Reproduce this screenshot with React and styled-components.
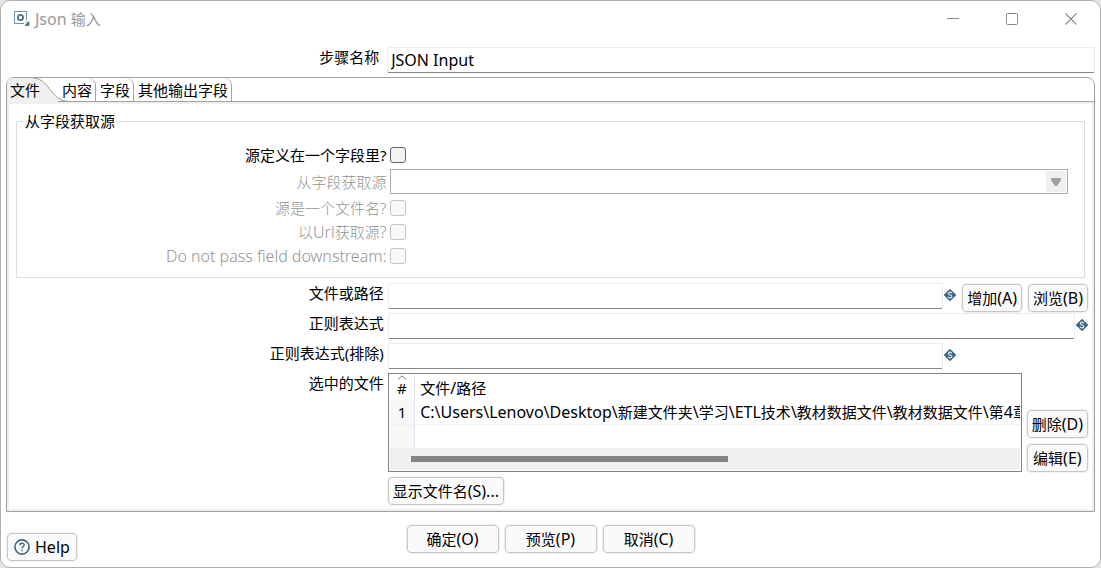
import React, { useState } from "react"
import styled, { createGlobalStyle } from "styled-components"

const files = [
    { id: 1, path: "C:\\Users\\Lenovo\\Desktop\\新建文件夹\\学习\\ETL技术\\教材数据文件\\教材数据文件\\第4章" },
]

const tabs = ["文件", "内容", "字段", "其他输出字段"]

// latin runs are set one size larger than the chinese around them
const Mixed = ({ text }) =>
    text.split(/([\x20-\x7e]+)/).map((part, i) => i % 2 ? <Latin key={i}>{part}</Latin> : part)

const VariableIcon = () => (
    <Diamond viewBox="0 0 12 12" aria-hidden="true">
        <path d="M6 0.6L11.4 6L6 11.4L0.6 6Z" fill="#3d6480" stroke="#3d6480" strokeWidth="1.2" strokeLinejoin="round" />
        <path d="M8 4.3C7.5 3.6 6.8 3.4 6 3.4C4.9 3.4 4.2 3.9 4.2 4.6C4.2 6.4 7.9 5.6 7.9 7.4C7.9 8.2 7.1 8.7 6 8.7C5.1 8.7 4.4 8.4 3.9 7.7M6 2.2V3.4M6 8.7V9.8" fill="none" stroke="#dfe8ee" strokeWidth="1.1" />
    </Diamond>
)

const App = () => {
    const [name, setName] = useState("JSON Input")
    const [active, setActive] = useState("文件")

    return (
        <>
            <GlobalStyle />
            <Window>
                <TitleBar>
                    <AppIcon viewBox="0 0 16 16" aria-hidden="true">
                        <path d="M10 12.5H0.5V0.5H12.5V9" fill="none" stroke="#7593a8" />
                        <circle cx="6.5" cy="6.5" r="2.6" fill="none" stroke="#4d738f" strokeWidth="1.8" />
                        <path d="M11 10L14 13M15 10.5V14.5H11Z" fill="#3d6480" stroke="#3d6480" strokeWidth="0.6" />
                    </AppIcon>
                    <Title><Mixed text="Json 输入" /></Title>
                    <WindowButton aria-label="最小化">
                        <svg width="12" height="12"><path d="M0 5.5H12" stroke="#8a8a8a" /></svg>
                    </WindowButton>
                    <WindowButton aria-label="最大化">
                        <svg width="12" height="12"><rect x="0.5" y="0.5" width="11" height="11" rx="1" fill="none" stroke="#8a8a8a" /></svg>
                    </WindowButton>
                    <WindowButton aria-label="关闭">
                        <svg width="12" height="12"><path d="M0.5 0.5L11.5 11.5M11.5 0.5L0.5 11.5" stroke="#8a8a8a" strokeWidth="1.1" /></svg>
                    </WindowButton>
                </TitleBar>

                <Body>
                    <NameRow>
                        <NameLabel htmlFor="step">步骤名称</NameLabel>
                        <Input id="step" value={name} onChange={(e) => setName(e.target.value)} />
                    </NameRow>

                    <Folder>
                        <TabList role="tablist">
                            {tabs.map((tab, i) => (
                                <Tab key={tab} role="tab" $first={i === 0} aria-selected={tab === active} onClick={() => setActive(tab)}>
                                    {i === 0 && (
                                        <TabShape viewBox="0 0 62 25" aria-hidden="true">
                                            <path d="M0 25V6Q0 0 7 0H26C43 0 43 23.5 62 23.5V25Z" fill="#f0f0f0" />
                                            <path d="M26 0C43 0 43 23.5 62 23.5" fill="none" stroke="#a0a0a0" />
                                        </TabShape>
                                    )}
                                    <span>{tab}</span>
                                </Tab>
                            ))}
                            <TabRest />
                        </TabList>
                        <Pane role="tabpanel">
                            <Group>
                                <Legend>从字段获取源</Legend>
                                <CheckRow>
                                    <Label htmlFor="in-field">源定义在一个字段里?</Label>
                                    <Checkbox id="in-field" />
                                </CheckRow>
                                <SelectRow>
                                    <Label htmlFor="source" $disabled>从字段获取源</Label>
                                    <SelectBox>
                                        <Select id="source" disabled><option></option></Select>
                                        <Arrow><svg width="10" height="8"><path d="M0 0H10V2L6 8H4L0 2Z" fill="#a0a0a0" /></svg></Arrow>
                                    </SelectBox>
                                </SelectRow>
                                <CheckRow>
                                    <Label htmlFor="is-file" $disabled>源是一个文件名?</Label>
                                    <Checkbox id="is-file" disabled />
                                </CheckRow>
                                <CheckRow>
                                    <Label htmlFor="is-url" $disabled><Mixed text="以Url获取源?" /></Label>
                                    <Checkbox id="is-url" disabled />
                                </CheckRow>
                                <CheckRow>
                                    <Label htmlFor="no-pass" $disabled><Mixed text="Do not pass field downstream:" /></Label>
                                    <Checkbox id="no-pass" disabled />
                                </CheckRow>
                            </Group>

                            <Row>
                                <Label htmlFor="path">文件或路径</Label>
                                <Field>
                                    <Input id="path" />
                                    <VariableIcon />
                                    <FieldButtons>
                                        <Button><Mixed text="增加(A)" /></Button>
                                        <Button><Mixed text="浏览(B)" /></Button>
                                    </FieldButtons>
                                </Field>
                            </Row>
                            <Row>
                                <Label htmlFor="regex">正则表达式</Label>
                                <Field>
                                    <Input id="regex" />
                                    <VariableIcon />
                                </Field>
                            </Row>
                            <Row>
                                <Label htmlFor="exclude">正则表达式(排除)</Label>
                                <Field $short>
                                    <Input id="exclude" />
                                    <VariableIcon />
                                </Field>
                            </Row>
                            <TableRow>
                                <Label as="span" id="selected">选中的文件</Label>
                                <TableField>
                                    <TableBox>
                                        <Table aria-labelledby="selected">
                                            <thead>
                                                <tr>
                                                    <Th>
                                                        <SortMark width="10" height="5"><path d="M1 4.5L5 0.8L9 4.5" fill="none" stroke="#777" /></SortMark>
                                                        #
                                                    </Th>
                                                    <Th><Mixed text="文件/路径" /></Th>
                                                </tr>
                                            </thead>
                                            <tbody>
                                                {files.map(file => (
                                                    <tr key={file.id}>
                                                        <Td>{file.id}</Td>
                                                        <Td><Mixed text={file.path} /></Td>
                                                    </tr>
                                                ))}
                                                <tr>
                                                    <Td></Td>
                                                    <Td></Td>
                                                </tr>
                                            </tbody>
                                        </Table>
                                        <Scrollbar><Thumb /></Scrollbar>
                                    </TableBox>
                                    <SideButtons>
                                        <Button><Mixed text="删除(D)" /></Button>
                                        <Button><Mixed text="编辑(E)" /></Button>
                                    </SideButtons>
                                </TableField>
                            </TableRow>
                            <ShowRow>
                                <Button><Mixed text="显示文件名(S)..." /></Button>
                            </ShowRow>
                        </Pane>
                    </Folder>
                </Body>

                <Footer>
                    <HelpButton>
                        <svg width="16" height="16" viewBox="0 0 16 16" aria-hidden="true">
                            <circle cx="8" cy="8" r="7.1" fill="none" stroke="#3d6480" strokeWidth="1.6" />
                            <path d="M5.9 6.3C5.9 3.6 10.2 3.7 10.2 6.1C10.2 7.6 8.1 7.6 8.1 9.5M8.1 10.7V12.2" fill="none" stroke="#3d6480" strokeWidth="1.4" />
                        </svg>
                        <Latin>Help</Latin>
                    </HelpButton>
                    <Actions>
                        <ActionButton><Mixed text="确定(O)" /></ActionButton>
                        <ActionButton><Mixed text="预览(P)" /></ActionButton>
                        <ActionButton><Mixed text="取消(C)" /></ActionButton>
                    </Actions>
                </Footer>
            </Window>
        </>
    )
}

const GlobalStyle = createGlobalStyle`
* {
    box-sizing: border-box;
}
body {
    margin: 0;
    background: #e4e4e4;
    color: #000;
}
body, button, input, select {
    font-family: "Noto Sans", "Noto Sans CJK SC", sans-serif;
    font-size: 15px;
    line-height: 20px;
}
`

const Window = styled.div`
    display: flex;
    flex-direction: column;
    min-height: 100vh;
    background: #fff;
    border: 1px solid #b0b0b0;
    border-radius: 10px;
`

const Latin = styled.span`
    font-size: 16px;
`

const TitleBar = styled.header`
    display: flex;
    align-items: center;
    height: 36px;
    padding-left: 13px;
`

const AppIcon = styled.svg`
    width: 16px;
    height: 16px;
    margin-right: 5px;
`

const Title = styled.h1`
    flex: 1;
    margin: 0;
    font-size: 15px;
    font-weight: 400;
    color: #999;
`

const WindowButton = styled.button`
    display: flex;
    align-items: center;
    justify-content: center;
    width: 59px;
    height: 36px;
    padding: 0;
    border: 0;
    background: none;
`

const Body = styled.main`
    display: flex;
    flex-direction: column;
    padding: 10px 5px 0;
`

const NameRow = styled.div`
    display: grid;
    grid-template-columns: 35% 1fr;
`

const Label = styled.label`
    padding-right: 4px;
    text-align: right;
    white-space: nowrap;
    color: ${props => props.$disabled ? "#949494" : "#000"};
    font-weight: ${props => props.$disabled ? 300 : 400};
`

const NameLabel = styled(Label)`
    padding-right: 8px;
`

const Input = styled.input`
    flex: 1;
    min-width: 0;
    height: 26px;
    padding: 0 3px;
    border: 1px solid #ececec;
    border-bottom-color: #868686;
    border-radius: 2px;
    outline: none;
    background: #fff;
    font-size: 16px;
`

const Folder = styled.section`
    margin-top: 4px;
    border: 1px solid #a0a0a0;
    border-radius: 8px 8px 0 0;
`

const TabList = styled.div`
    display: flex;
    height: 24px;
`

const Tab = styled.button`
    position: relative;
    padding: 0 3px 0 4px;
    border: 0;
    border-right: ${props => props.$first ? "0" : "1px solid #a0a0a0"};
    border-bottom: ${props => props.$first ? "0" : "1px solid #a0a0a0"};
    border-radius: 0 8px 0 0;
    background: none;
    color: #000;
    white-space: nowrap;

    span {
        position: relative;
    }
    &:first-child {
        width: 51px;
        padding-left: 3px;
        text-align: left;
    }
`

const TabShape = styled.svg`
    position: absolute;
    left: 0;
    top: 0;
    width: 62px;
    height: 25px;
`

const TabRest = styled.div`
    flex: 1;
    border-bottom: 1px solid #a0a0a0;
`

const Pane = styled.div`
    padding: 7px 1px 4px 0;
    border: 2px solid #f0f0f0;
`

const Group = styled.fieldset`
    margin: 0 6px 5px 7px;
    padding: 12px 0 9px;
    border: 1px solid #dcdcdc;
`

const Legend = styled.legend`
    margin-left: 6px;
    padding: 0 2px;
`

const CheckRow = styled.div`
    display: grid;
    grid-template-columns: 35% 1fr;
    align-items: center;
    height: 24px;
`

const SelectRow = styled(CheckRow)`
    height: 29px;
`

const Checkbox = styled.input.attrs({ type: "checkbox" })`
    appearance: none;
    width: 16px;
    height: 16px;
    margin: 0;
    border: 1px solid #626262;
    border-radius: 3px;
    background: #f3f3f3;

    &:disabled {
        border-color: #c3c3c3;
        background: #f9f9f9;
    }
`

const SelectBox = styled.div`
    display: grid;
    margin-right: 16px;
`

const Select = styled.select`
    grid-area: 1 / 1;
    appearance: none;
    height: 25px;
    border: 1px solid #adadad;
    border-radius: 0;
    background: #fff;
    opacity: 1;
`

const Arrow = styled.span`
    grid-area: 1 / 1;
    justify-self: end;
    align-self: center;
    display: flex;
    align-items: center;
    justify-content: center;
    width: 20px;
    height: 21px;
    margin-right: 2px;
    background: #f0f0f0;
    pointer-events: none;
`

const Row = styled.div`
    display: grid;
    grid-template-columns: 35% 1fr;
    height: 30px;
`

const Field = styled.div`
    display: flex;
    align-items: flex-start;
    padding-right: ${props => props.$short ? "135px" : "3px"};
`

const Diamond = styled.svg`
    flex: none;
    width: 12px;
    height: 12px;
    margin: 6px 0 0 1px;
`

const FieldButtons = styled.div`
    display: flex;
    gap: 6px;
    padding: 1px 0 0 6px;
`

const Button = styled.button`
    height: 28px;
    padding: 0 4px;
    border: 1px solid #c6c6c6;
    border-radius: 4px;
    outline: 1px solid #f0f0f0;
    background: #fafafa;
    color: #000;
    white-space: nowrap;
`

const TableRow = styled.div`
    display: grid;
    grid-template-columns: 35% minmax(0, 1fr);
`

const TableField = styled.div`
    display: flex;
    gap: 5px;
    padding-right: 3px;
`

const TableBox = styled.div`
    flex: 1;
    min-width: 0;
    overflow: hidden;
    padding: 1px;
    border: 1px solid #82828c;
`

const Table = styled.table`
    width: 100%;
    border-collapse: collapse;
    table-layout: fixed;
`

const Th = styled.th`
    height: 25px;
    padding: 0 5px;
    font-weight: 400;
    text-align: left;

    &:first-child {
        position: relative;
        width: 25px;
        padding: 0;
        border-right: 1px solid #e5e5e5;
        text-align: center;
    }
`

const SortMark = styled.svg`
    position: absolute;
    left: 7px;
    top: 0;
`

const Td = styled.td`
    height: 24px;
    padding: 0 0 0 5px;
    overflow: hidden;
    border-bottom: 1px solid #f0f0f0;
    white-space: nowrap;

    &:first-child {
        padding: 0;
        border-right: 1px solid #dce6f4;
        background: #f7f7f7;
        text-align: center;
    }
`

const Scrollbar = styled.div`
    height: 21px;
    padding: 7px 21px;
    background: #f0f0f0;
`

const Thumb = styled.div`
    width: 54%;
    height: 6px;
    background: #858585;
`

const SideButtons = styled.div`
    display: flex;
    flex-direction: column;
    justify-content: flex-end;
    gap: 6px;
`

const ShowRow = styled.div`
    margin: 5px 0 0 35%;
`

const Footer = styled.footer`
    display: grid;
    grid-template-columns: 1fr auto 1fr;
    padding: 13px 6px 6px;
`

const HelpButton = styled(Button)`
    display: flex;
    align-items: center;
    gap: 5px;
    justify-self: start;
    margin-top: 8px;
    padding: 0 6px;
`

const Actions = styled.div`
    display: flex;
    gap: 6px;
`

const ActionButton = styled(Button)`
    width: 92px;
`

export default App
